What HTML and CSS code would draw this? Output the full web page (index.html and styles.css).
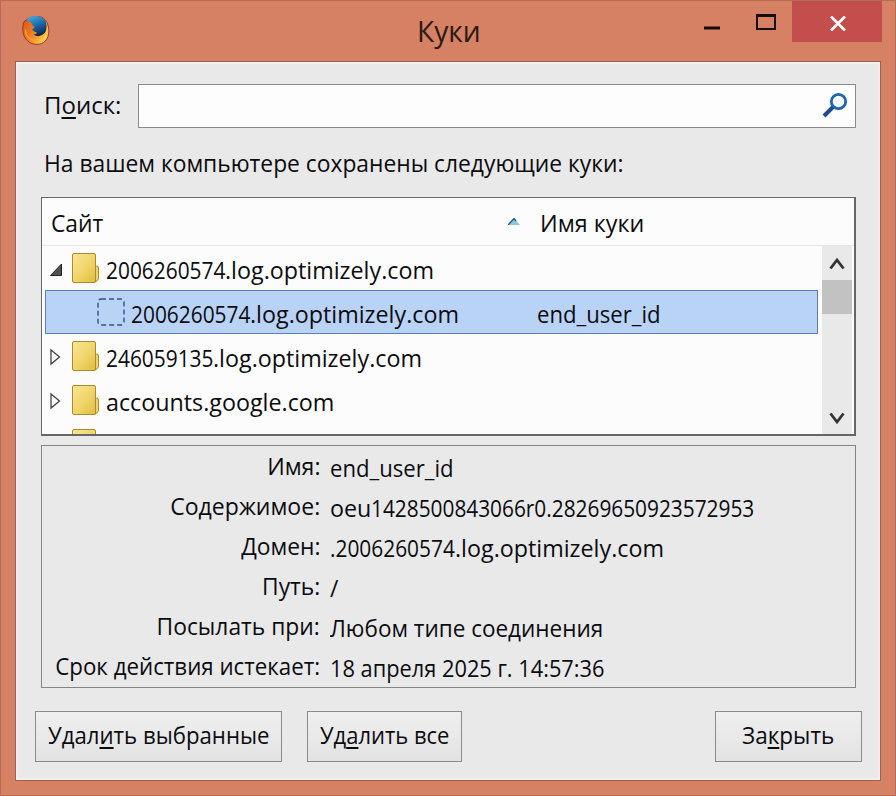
FILE: index.html
```html
<!DOCTYPE html>
<html lang="ru">
<head>
<meta charset="utf-8">
<title>Куки</title>
<link rel="stylesheet" href="styles.css">
</head>
<body>
<svg class="defs" aria-hidden="true">
  <defs>
    <linearGradient id="gold" x1="0" y1="0" x2="1" y2="1">
      <stop offset="0" stop-color="#f9e795"/><stop offset=".55" stop-color="#f0d468"/><stop offset="1" stop-color="#e2bd3e"/>
    </linearGradient>
    <linearGradient id="fox" x1="0" y1="0" x2="1" y2=".6">
      <stop offset="0" stop-color="#d9501d"/><stop offset=".5" stop-color="#ee7a20"/><stop offset="1" stop-color="#ffd04a"/>
    </linearGradient>
    <linearGradient id="globe" x1="0" y1="0" x2=".4" y2="1">
      <stop offset="0" stop-color="#4cb4dc"/><stop offset=".5" stop-color="#1b73b4"/><stop offset="1" stop-color="#122c55"/>
    </linearGradient>
    <symbol id="folder" viewBox="0 0 28 31">
      <path d="M20 13h4.500q2 0 2 2v10q0 1.500-1.200 2.600L23 29.300H18z" fill="#efd36c" stroke="#a98a30"/>
      <rect x=".5" y=".5" width="23" height="29" rx="1.500" fill="url(#gold)" stroke="#a98a30"/>
    </symbol>
  </defs>
</svg>
<div class="window">
  <header class="titlebar">
    <svg class="logo" viewBox="0 0 30 32">
      <path d="M6 4C11 1 20 0 24 5c5 6 5 17 0 22-4 4.500-13 4.500-18 0C0 22 0 12 2 7z" fill="url(#fox)" stroke="#8e3a26" stroke-width="1"/>
      <path d="M5 4C10 -.5 20 0 23.500 5c3 5 2.500 12-1.500 15-3 2.500-8 2.500-10.500 0 2 .4 3.500-.8 4-2-2.500-.2-4.500-1.500-5-3.500 1-.7 2-.8 2.500-2.500-1.500-.4-2.500-1.500-3-3.500C8.500 7 6 6 5 4z" fill="url(#globe)"/>
      <path d="M3.500 15c0 7 5 11 10 11.500" fill="none" stroke="#f89a35" stroke-width="1.500"/>
    </svg>
    <h1 class="title"><span class="t s94">Куки</span></h1>
    <div class="controls">
      <svg class="ctl" viewBox="0 0 16 4"><path d="M0 2h16" stroke="#150d0a" stroke-width="3"/></svg>
      <svg class="ctl-max" viewBox="0 0 20 16"><path d="M1 1.500h18v13.500H1z" fill="none" stroke="#150d0a" stroke-width="2"/><path d="M0 1.500h20" stroke="#150d0a" stroke-width="3"/></svg>
      <div class="close"><svg viewBox="0 0 16 15"><path d="M1 .5l14 14M15 .5l-14 14" stroke="#fff" stroke-width="2.700"/></svg></div>
    </div>
  </header>

  <main class="client">
    <div class="search">
      <label class="search-label">П<u>о</u>иск:</label>
      <div class="field">
        <svg viewBox="0 0 26 26"><path d="M11.500 14.500L2 24" stroke="#1d4c86" stroke-width="4"/><circle cx="16.500" cy="9.500" r="7.200" fill="#f4fbff" stroke="#1f65ae" stroke-width="2.800"/></svg>
      </div>
    </div>
    <p class="caption"><span class="t s95">На вашем компьютере сохранены следующие куки:</span></p>

    <section class="list">
      <div class="list-head">
        <div class="col-site"><span class="t s95">Сайт</span>
          <svg class="sort" viewBox="0 0 12 7"><path d="M0 7L6 0l6 7z" fill="#8fc3e0"/><path d="M0 7L6 .6 8 3" fill="none" stroke="#26507e" stroke-width="1.300"/></svg>
        </div>
        <div class="col-name"><span class="t s97">Имя куки</span></div>
      </div>
      <div class="list-body">
        <div class="rows">
          <div class="row">
            <svg class="twisty" viewBox="0 0 12 14"><path d="M.5 12.500L11.500 1v11.500z" fill="#505050" stroke="#222"/></svg>
            <svg class="folder"><use href="#folder"/></svg>
            <span class="host"><span class="num n10">2006260574</span><span class="t s97">.log.optimizely.com</span></span>
          </div>
          <div class="row selected">
            <svg class="blank" viewBox="0 0 28 28"><rect x="1" y="1" width="26" height="26" rx="3" fill="none" stroke="#3a5278" stroke-width="1.400" stroke-dasharray="5 3"/></svg>
            <span class="host"><span class="num n10">2006260574</span><span class="t s97">.log.optimizely.com</span></span>
            <span class="cookie"><span class="t s92">end_user_id</span></span>
          </div>
          <div class="row">
            <svg class="twisty closed" viewBox="0 0 11 18"><path d="M1 2l8.500 7L1 16z" fill="#fff" stroke="#444" stroke-width="1.300"/></svg>
            <svg class="folder"><use href="#folder"/></svg>
            <span class="host"><span class="num n9">246059135</span><span class="t s97">.log.optimizely.com</span></span>
          </div>
          <div class="row">
            <svg class="twisty closed" viewBox="0 0 11 18"><path d="M1 2l8.500 7L1 16z" fill="#fff" stroke="#444" stroke-width="1.300"/></svg>
            <svg class="folder"><use href="#folder"/></svg>
            <span class="host"><span class="t s97">accounts.google.com</span></span>
          </div>
          <div class="row partial">
            <svg class="folder"><use href="#folder"/></svg>
          </div>
        </div>
        <div class="scrollbar">
          <svg class="arrow" viewBox="0 0 16 13"><path d="M1.500 11.500L8 3l6.500 8.500" fill="none" stroke="#333" stroke-width="2.800"/></svg>
          <div class="thumb"></div>
          <svg class="arrow down" viewBox="0 0 16 13"><path d="M1.500 1.500L8 10l6.500-8.500" fill="none" stroke="#333" stroke-width="2.800"/></svg>
        </div>
      </div>
    </section>

    <section class="details">
      <div class="pair"><span class="key"><span class="t s96">Имя:</span></span><span class="val"><span class="t s92">end_user_id</span></span></div>
      <div class="pair"><span class="key"><span class="t s96">Содержимое:</span></span><span class="val"><span class="oeu">oeu</span><span class="t s87">1428500843066r0.28269650923572953</span></span></div>
      <div class="pair"><span class="key"><span class="t s95">Домен:</span></span><span class="val"><span class="num ndot">.2006260574</span><span class="t s97">.log.optimizely.com</span></span></div>
      <div class="pair"><span class="key"><span class="t s95">Путь:</span></span><span class="val"><span class="t s95">/</span></span></div>
      <div class="pair"><span class="key"><span class="t s95">Посылать при:</span></span><span class="val"><span class="t s94">Любом типе соединения</span></span></div>
      <div class="pair"><span class="key"><span class="t s93">Срок действия истекает:</span></span><span class="val"><span class="t s91">18 апреля 2025 г. 14:57:36</span></span></div>
    </section>

    <footer class="actions">
      <button class="btn w1"><span class="t s925">Удал<u>и</u>ть выбранные</span></button>
      <button class="btn w2"><span class="t s915">Уд<u>а</u>лить все</span></button>
      <button class="btn w3"><span class="t s94">За<u>к</u>рыть</span></button>
    </footer>
  </main>
</div>
</body>
</html>
```
FILE: styles.css
```css
* { box-sizing: border-box; }

body {
  margin: 0;
  font: 24px/32px "Open Sans", "Noto Sans", sans-serif;
  color: #0c0c10;
}

.defs { display: block; width: 0; height: 0; }

.window {
  display: flex;
  flex-direction: column;
  width: 896px;
  height: 796px;
  padding: 0 14px 14px;
  overflow: hidden;
  background: #d68064;
  border: 1px solid #b56b55;
}

/* Condensed text runs */
.t { display: inline-block; white-space: nowrap; transform-origin: left center; }
.s97 { transform: scaleX(.97); }
.s96 { transform: scaleX(.96); }
.s95 { transform: scaleX(.95); }
.s94 { transform: scaleX(.938); }
.s93 { transform: scaleX(.929); }
.s92 { transform: scaleX(.922); }
.s925 { transform: scaleX(.925); }
.s915 { transform: scaleX(.915); }
.s91 { transform: scaleX(.908); }
.s87 { transform: scaleX(.868); }
.num { display: inline-block; white-space: nowrap; transform: scaleX(.87); transform-origin: left center; }
.n10 { width: 119px; }
.n9 { width: 107px; }
.ndot { width: 125px; }
.oeu { display: inline-block; width: 41px; transform: scaleX(.97); transform-origin: left center; }

u { text-decoration-thickness: 2px; text-underline-offset: 3px; text-decoration-skip-ink: none; }

.titlebar {
  display: flex;
  align-items: flex-start;
  flex: none;
  height: 60px;
  padding-left: 7px;
}
.logo { width: 29px; height: 31px; margin-top: 14px; }
.title {
  margin: 12px 0 0 366px;
  font-size: 30px;
  line-height: 36px;
  font-weight: 400;
  color: #2a1b16;
}
.controls { display: flex; margin-left: auto; margin-right: -1px; }
.ctl { width: 16px; height: 4px; margin: 25px 36px 0 0; }
.ctl-max { width: 20px; height: 16px; margin: 13px 16px 0 0; }
.close {
  display: flex;
  justify-content: center;
  align-items: center;
  width: 90px;
  height: 41px;
  padding-top: 3px;
  padding-left: 2px;
  background: #c44e4b;
}
.close svg { width: 16px; height: 15px; }

.client {
  flex: 1;
  padding: 22px 18px 0 19px;
  background: #e9e9ea;
  border: 1px solid #9c6253;
  box-shadow: inset 0 0 0 2px #f0f0f0;
}

.search { display: flex; align-items: center; padding: 0 6px 0 9px; }
.search-label { width: 94px; padding-bottom: 2px; }
.field {
  display: flex;
  flex: 1;
  align-items: center;
  justify-content: flex-end;
  height: 44px;
  padding: 0 7px 2px 0;
  background: #fdfdfe;
  border: 1px solid #8a8a8c;
}
.field svg { width: 26px; height: 26px; }

.caption { margin: 19px 0 0 9px; height: 50px; }

.list {
  height: 239px;
  margin: 0 6px;
  overflow: hidden;
  background: #fcfcfc;
  border: 2px solid #666768;
  border-width: 1px 2px 2px 1px;
}
.list-head {
  display: flex;
  align-items: center;
  height: 48px;
  padding: 3px 0 0 9px;
  border-bottom: 1px solid #e6e6e8;
}
.col-site { display: flex; align-items: center; width: 489px; }
.sort { width: 12px; height: 7px; margin-left: auto; margin-right: 20px; margin-top: -3px; }
.list-body { display: flex; height: 188px; padding-right: 2px; }
.rows { flex: 1; padding-right: 4px; }
.row {
  display: flex;
  align-items: center;
  height: 44px;
  margin-left: 3px;
  padding-left: 5px;
}
.twisty { width: 12px; height: 14px; margin: 4px 10px 0 0; }
.twisty.closed { width: 11px; height: 18px; margin: 2px 11px 0 0; }
.folder { width: 28px; height: 31px; margin-right: 6px; }
.partial { align-items: flex-start; padding-left: 27px; padding-top: 7px; }
.selected {
  padding-left: 51px;
  background: #b9d3f7;
  border: 1px solid #5c7fba;
}
.blank { width: 28px; height: 28px; margin-right: 6px; }
.selected .host { width: 406px; }
.host, .cookie { padding-top: 3px; }
.host, .val { display: flex; white-space: nowrap; }

.scrollbar {
  display: flex;
  flex-direction: column;
  align-items: center;
  width: 30px;
  background: #e9e9e9;
}
.arrow { width: 16px; height: 13px; margin: 11px 0 10px; }
.thumb { width: 30px; height: 34px; background: #c2c2c2; }
.arrow.down { margin: auto 0 9px; }

.details {
  height: 243px;
  margin: 9px 6px 0;
  border: 1px solid #858587;
}
.pair { display: flex; align-items: center; height: 40px; }
.key { display: flex; justify-content: flex-end; width: 278px; padding-bottom: 1px; }
.key .t { transform-origin: right center; }
.val { margin-left: 10px; padding-top: 3px; }

.actions { display: flex; padding-top: 23px; }
.btn {
  height: 51px;
  padding: 0 0 3px;
  border: 1px solid #8b8b8d;
  background: linear-gradient(#efefef, #e3e3e4);
  font: inherit;
  color: inherit;
}
.btn .t { transform-origin: center; }
.w1 { width: 247px; }
.w2 { width: 155px; margin-left: 25px; }
.w3 { width: 147px; margin-left: auto; }
```
